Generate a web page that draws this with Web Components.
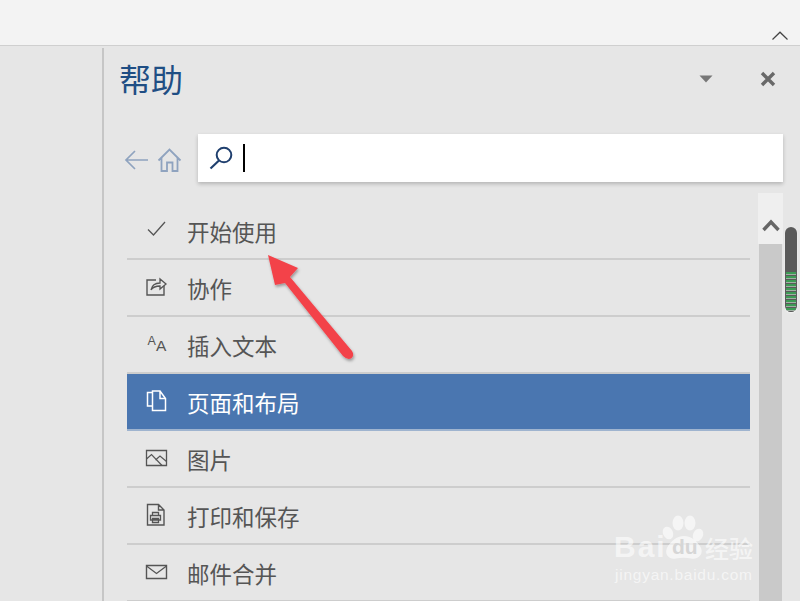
<!DOCTYPE html>
<html lang="zh"><head><meta charset="utf-8"><title>帮助</title>
<style>
html,body{margin:0;padding:0;height:601px;width:800px;overflow:hidden;background:#e6e6e6}
</style></head><body>
<help-app>
  <top-bar slot="top"></top-bar>
  <help-panel slot="panel" title-text="帮助">
    <help-row label="开始使用" icon="check"></help-row>
    <help-row label="协作" icon="share"></help-row>
    <help-row label="插入文本" icon="text"></help-row>
    <help-row label="页面和布局" icon="pages" selected></help-row>
    <help-row label="图片" icon="picture"></help-row>
    <help-row label="打印和保存" icon="print"></help-row>
    <help-row label="邮件合并" icon="mail"></help-row>
  </help-panel>
  <annotation-arrow slot="over"></annotation-arrow>
  <scroll-handle slot="over"></scroll-handle>
  <baidu-mark slot="over"></baidu-mark>
</help-app>
<script>
const F='"Noto Sans CJK SC","Microsoft YaHei","Liberation Sans",sans-serif';
function def(name,html){
  customElements.define(name,class extends HTMLElement{
    connectedCallback(){
      if(this.shadowRoot)return;
      const r=this.attachShadow({mode:'open'});
      r.innerHTML=typeof html==='function'?html(this):html;
    }
  });
}
def('help-app',`<style>
:host{display:flex;flex-direction:column;width:800px;height:601px;position:relative;overflow:hidden;background:#e6e6e6;font-family:${F}}
.main{display:flex;flex:1;min-height:0}
.gutter{width:102px;flex:none}
</style>
<slot name="top"></slot>
<div class="main"><div class="gutter"></div><slot name="panel"></slot></div>
<slot name="over"></slot>`);
def('top-bar',`<style>
:host{display:flex;justify-content:flex-end;align-items:flex-end;flex:none;height:45px;background:#f3f3f3;border-bottom:1px solid #cfcfcf;padding-right:11px}
svg{display:block;margin-bottom:4px}
</style><svg width="18" height="11" viewBox="0 0 18 11"><path d="M1.500 9.500 9 2.200 16.500 9.500" fill="none" stroke="#444" stroke-width="1.200"/></svg>`);
def('help-panel',el=>`<style>
:host{display:flex;flex-direction:column;flex:1;min-width:0;position:relative;font-family:${F}}
.edge{position:absolute;left:0;top:2px;bottom:0;width:2px;background:#c6c6c6}
.head{display:flex;align-items:center;height:68px;padding:0 24px 0 17px;flex:none}
h1{margin:0;font-size:32px;line-height:40px;font-weight:400;color:#1f4e84;flex:1;position:relative;top:-2px}
.tools{display:flex;align-items:center;gap:47px;position:relative;top:-1px}
.tools svg{display:block}
.search-row{display:flex;align-items:center;height:48px;margin-top:20px;padding-left:22px;padding-right:17px;flex:none}
.nav{display:flex;align-items:center;gap:8px;width:74px;flex:none;position:relative;top:2px}
.nav svg{display:block}
search-box{flex:1}
.body{display:flex;flex:1;min-height:0;margin-top:11px}
.list{flex:1;min-width:0;margin-left:25px;margin-right:8px;padding-top:10px}
</style>
<div class="edge"></div>
<div class="head"><h1>${el.getAttribute('title-text')}</h1>
<div class="tools">
<svg width="14" height="8" viewBox="0 0 14 8"><path d="M0.500 0.500H13.500L7 7.500Z" fill="#777"/></svg>
<svg width="16" height="16" viewBox="0 0 16 16"><path d="M2 2 14 14M14 2 2 14" stroke="#696969" stroke-width="3.400" fill="none"/></svg>
</div></div>
<div class="search-row"><div class="nav">
<svg width="25" height="24" viewBox="0 0 25 24"><path d="M24 12H2M11 3 2 12l9 9" fill="none" stroke="#8fa3bf" stroke-width="1.700"/></svg>
<svg width="25" height="26" viewBox="0 0 25 26"><path d="M1.500 13.500 12.500 2.500 23.500 13.500M4.500 11V24H10V15.500H15.500V24H20.500V11" fill="none" stroke="#8fa3bf" stroke-width="1.800"/></svg>
</div><search-box></search-box></div>
<div class="body"><div class="list"><slot></slot></div><panel-scroll></panel-scroll></div>`);
def('search-box',`<style>
:host{display:flex;align-items:center;height:48px;background:#fff;box-shadow:0 2px 4px rgba(0,0,0,.22)}
svg{display:block;margin-left:11px;position:relative;top:-1px}
.caret{width:2px;height:28px;background:#000;margin-left:9px}
</style><svg width="25" height="25" viewBox="0 0 25 25"><circle cx="15" cy="10" r="7.300" fill="none" stroke="#1f3f6e" stroke-width="2"/><path d="M10 15.500 1.500 23.500" stroke="#1f3f6e" stroke-width="2.200" fill="none"/></svg><div class="caret"></div>`);
const icons={
check:`<path d="M3 11.500 8.500 17 20 4" fill="none" stroke="currentColor" stroke-width="1.300"/>`,
share:`<path d="M11 5H2V20H19V11" fill="none" stroke="currentColor" stroke-width="1.400"/><path d="M6 15C7 10 10 8 15 8V4L21 9 15 14V11C11 11 8 12 6 15Z" fill="none" stroke="currentColor" stroke-width="1.300"/>`,
text:`<text x="2.500" y="13" font-size="12.500" font-family="Liberation Sans" fill="currentColor">A</text><text x="11" y="19" font-size="15.500" font-family="Liberation Sans" fill="currentColor">A</text>`,
pages:`<path d="M8 3.500H2.500V17H7" fill="none" stroke="currentColor" stroke-width="1.500"/><path d="M7.500 6.500V21.500H20.500V9.500L15 2H7.500V6.500M15 2V9.500H20.500" fill="none" stroke="currentColor" stroke-width="1.500"/>`,
picture:`<path d="M1.500 4.500H21.500V19.500H1.500Z" fill="none" stroke="currentColor" stroke-width="1.300"/><path d="M1.500 13 6.500 8.500 17 19.500M10.500 14 15 10 21.500 15.500" fill="none" stroke="currentColor" stroke-width="1.200"/>`,
print:`<path d="M2.500 1.500H13.500L19 7V22H2.500ZM13.500 1.500V7H19" fill="none" stroke="currentColor" stroke-width="1.400"/><path d="M7.500 9.500H13.500V12.500H7.500ZM5.500 12.500H15.500V17H5.500ZM7.500 15.500H13.500V19.500H7.500Z" fill="none" stroke="currentColor" stroke-width="1.300"/>`,
mail:`<path d="M1.500 5.500H21.500V18.500H1.500Z" fill="none" stroke="currentColor" stroke-width="1.400"/><path d="M1.500 6 11.500 13.500 21.500 6" fill="none" stroke="currentColor" stroke-width="1.300"/>`};
def('help-row',el=>{const sel=el.hasAttribute('selected');return `<style>
:host{display:flex;align-items:center;height:55px;border-bottom:2px solid ${sel?'#9fb4cf':'#cdcdcd'};background:${sel?'#4a76b0':'transparent'};color:${sel?'#fff':'#555'};font-family:${F}}
.ic{width:23px;height:23px;margin-left:18px;flex:none;position:relative;top:-1px}
svg{display:block;overflow:visible}
.t{margin-left:20px;font-size:22.500px;line-height:30px;white-space:nowrap;position:relative;left:-1px}
</style><div class="ic"><svg width="23" height="23" viewBox="0 0 23 23">${icons[el.getAttribute('icon')]}</svg></div><span class="t">${el.getAttribute('label')}</span>`});
def('panel-scroll',`<style>
:host{display:flex;flex-direction:column;width:25px;flex:none;margin-right:17px}
.btn{height:51px;background:#efefef;display:flex;justify-content:center;padding-top:25px;box-sizing:border-box}
.btn svg{display:block}
.track{flex:1;background:#c9c9c9;margin:0 1px}
</style><div class="btn"><svg width="18" height="14" viewBox="0 0 18 14"><path d="M1.500 12 9 4 16.500 12" fill="none" stroke="#666" stroke-width="3.400"/></svg></div><div class="track"></div>`);
def('annotation-arrow',`<style>
:host{position:absolute;left:262px;top:250px;width:100px;height:115px;display:block}
svg{display:block;overflow:visible}
</style><svg width="100" height="115" viewBox="0 0 100 115">
<defs><filter id="s" x="-20%" y="-20%" width="150%" height="150%"><feDropShadow dx="1" dy="2" stdDeviation="1.500" flood-color="#000" flood-opacity=".35"/></filter></defs>
<g filter="url(#s)"><path d="M6 5 36 18 28 27 90 101Q93 106 89 108.500 85 110 81 106L23 33 13 35Z" fill="#f3424a"/></g></svg>`);
def('scroll-handle',`<style>
:host{position:absolute;left:785px;top:227px;width:12px;height:85px;display:block;border-radius:6px;background:#5a5a5a;overflow:hidden;box-shadow:0 1px 2px rgba(255,255,255,.6)}
.g{position:absolute;left:1px;right:1px;top:45px;bottom:0;background:repeating-linear-gradient(to bottom,#3d9a54 0 2px,#9fb0a3 2px 3px,#5a5a5a 3px 4px)}
</style><div class="g"></div>`);
def('baidu-mark',`<style>
:host{position:absolute;left:612px;top:512px;width:160px;height:84px;display:block;color:rgba(255,255,255,.6);font-family:"Liberation Sans",sans-serif}
.bai{position:absolute;left:2px;top:18px;font-size:30px;line-height:34px;font-weight:700;letter-spacing:2px}
.paw{position:absolute;left:0;top:0;display:block;overflow:visible}
.du{position:absolute;left:60px;top:25px;font-size:21px;font-weight:700;line-height:20px;color:#d6d6d6}
.cn{position:absolute;left:93px;top:21px;font-size:24px;line-height:30px;font-family:${F};font-weight:500;white-space:nowrap}
.url{position:absolute;left:3px;top:53px;font-size:15.500px;line-height:20px;white-space:nowrap;letter-spacing:.75px}
</style>
<span class="bai">Bai</span>
<svg class="paw" width="160" height="60" viewBox="0 0 160 60"><g fill="rgba(255,255,255,.6)"><ellipse cx="56" cy="21" rx="5" ry="6.500" transform="rotate(-25 56 21)"/><ellipse cx="66" cy="11" rx="5.500" ry="7.500"/><ellipse cx="78" cy="11" rx="5.500" ry="7.500"/><ellipse cx="86" cy="23" rx="5" ry="6.500" transform="rotate(25 86 23)"/><path d="M72 24C80 24 85 30 88 34 93 42 86 48 79 46.500 74 45.500 69 45.500 64 46.500 57 48 51 42 56 34 59 30 64 24 72 24Z"/></g></svg>
<span class="du">du</span>
<span class="cn">经验</span>
<span class="url">jingyan.baidu.com</span>`);
</script>
</body></html>
